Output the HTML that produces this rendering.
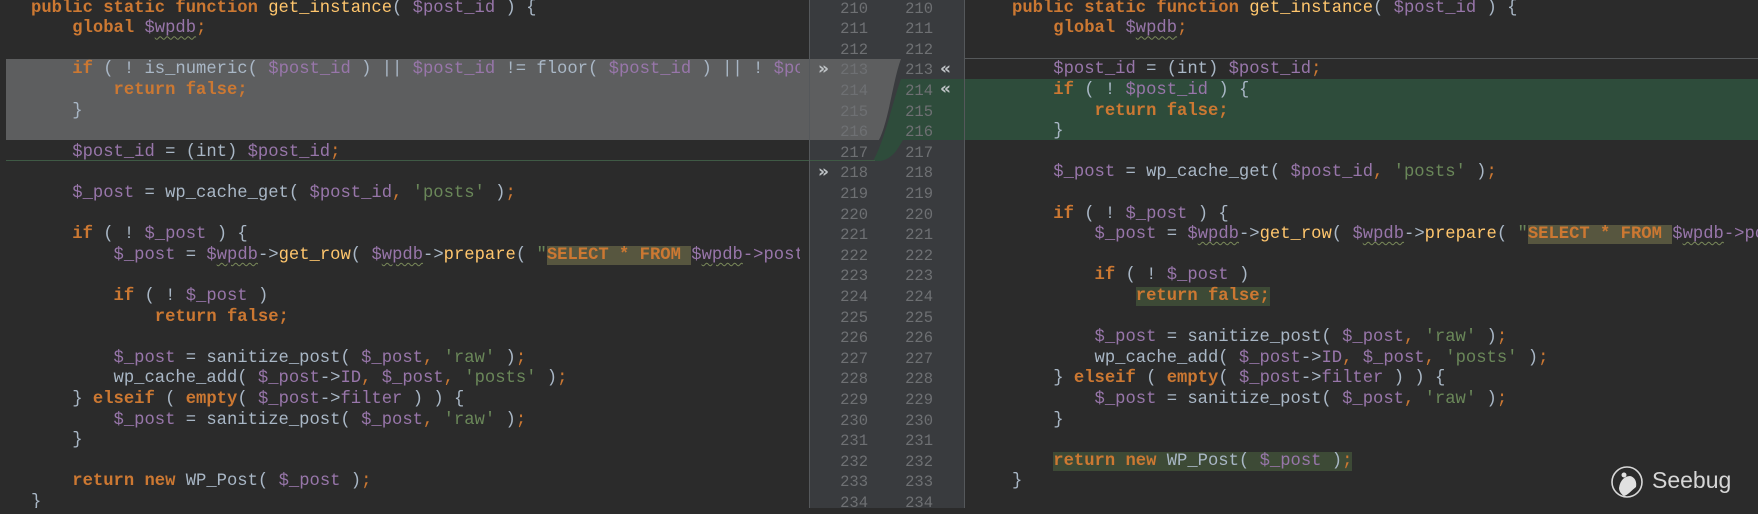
<!DOCTYPE html>
<html><head><meta charset="utf-8"><style>
body{margin:0;width:1758px;height:508px;background:#2b2b2b;overflow:hidden;position:relative;font-family:"Liberation Mono",monospace;}
.pane{position:absolute;top:0;height:508px;overflow:hidden;}
pre{margin:0;position:absolute;top:-1.3px;font-family:"Liberation Mono",monospace;font-size:17.2px;line-height:20.6px;color:#a9b7c6;white-space:pre;}
.k{color:#cc7832;font-weight:bold}
.v{color:#9876aa}
.f{color:#ffc66d}
.s{color:#6a8759}
.o{color:#cc7832}
.u{text-decoration:underline wavy #7a8a5a;text-decoration-thickness:1px;text-underline-offset:3px}
.hl{background:#57563f}
.hg{background:#3d4a36}
.num{position:absolute;top:-1.3px;font-family:"Liberation Mono",monospace;font-size:15.5px;line-height:20.6px;color:#6e7073;white-space:pre;text-align:right;}
.ch{position:absolute;color:#bfc3c6;font-size:17px;font-family:"DejaVu Sans",sans-serif;font-weight:bold}
</style></head><body>
<div style="position:absolute;left:6px;top:59px;width:804px;height:81px;background:#5d5e5f"></div>
<div style="position:absolute;left:6px;top:160px;width:804px;height:1px;background:#3f5a45"></div>
<div style="position:absolute;left:965px;top:58px;width:793px;height:1px;background:#55585a"></div>
<div style="position:absolute;left:965px;top:79px;width:793px;height:61px;background:#2e4c3b"></div>
<div style="position:absolute;left:809px;top:0;width:156px;height:508px;background:#393b3e"></div>
<div style="position:absolute;left:809px;top:0;width:1px;height:508px;background:#55585b"></div>
<div style="position:absolute;left:964px;top:0;width:1px;height:508px;background:#55585b"></div>
<svg style="position:absolute;left:809px;top:0" width="156" height="200">
<path d="M1 59 L92 59 C84 80 80 120 70 140 L1 140 Z" fill="#5d5e5f"/>
<path d="M92 79 L155 79 L155 140 L94 140 C88 150 84 158 72 161 L64 161 C76 140 84 100 92 79 Z" fill="#2e4c3b"/>
<line x1="1" y1="160.5" x2="66" y2="160.5" stroke="#3f5a45"/>
</svg>
<div class="num" style="left:830px;width:38px">210
211
212
213
214
215
216
217
218
219
220
221
222
223
224
225
226
227
228
229
230
231
232
233
234</div>
<div class="num" style="left:895px;width:38px">210
211
212
213
214
215
216
217
218
219
220
221
222
223
224
225
226
227
228
229
230
231
232
233
234</div>
<div class="ch" style="left:818px;top:59px">»</div>
<div class="ch" style="left:818px;top:162px">»</div>
<div class="ch" style="left:940px;top:59px">«</div>
<div class="ch" style="left:940px;top:79px">«</div>
<div class="pane" style="left:0;width:800px">
<pre style="left:31px"><span class="k">public static function </span><span class="f">get_instance</span>( <span class="v">$post_id</span> ) {
    <span class="k">global </span><span class="v">$<span class="u">wpdb</span></span><span class="o">;</span>

    <span class="k">if </span>( ! is_numeric( <span class="v">$post_id</span> ) || <span class="v">$post_id</span> != floor( <span class="v">$post_id</span> ) || ! <span class="v">$post_id</span> ) {
        <span class="k">return false;</span>
    }

    <span class="v">$post_id</span> = (int) <span class="v">$post_id</span><span class="o">;</span>

    <span class="v">$_post</span> = wp_cache_get( <span class="v">$post_id</span><span class="o">, </span><span class="s">'posts'</span> )<span class="o">;</span>

    <span class="k">if </span>( ! <span class="v">$_post</span> ) {
        <span class="v">$_post</span> = <span class="v">$<span class="u">wpdb</span></span>-&gt;<span class="f">get_row</span>( <span class="v">$<span class="u">wpdb</span></span>-&gt;<span class="f">prepare</span>( <span class="s">"</span><span class="k hl">SELECT * FROM </span><span class="v">$<span class="u">wpdb</span>-&gt;posts</span>

        <span class="k">if </span>( ! <span class="v">$_post</span> )
            <span class="k">return false;</span>

        <span class="v">$_post</span> = sanitize_post( <span class="v">$_post</span><span class="o">, </span><span class="s">'raw'</span> )<span class="o">;</span>
        wp_cache_add( <span class="v">$_post</span>-&gt;<span class="v">ID</span><span class="o">, </span><span class="v">$_post</span><span class="o">, </span><span class="s">'posts'</span> )<span class="o">;</span>
    } <span class="k">elseif </span>( <span class="k">empty</span>( <span class="v">$_post</span>-&gt;<span class="v">filter</span> ) ) {
        <span class="v">$_post</span> = sanitize_post( <span class="v">$_post</span><span class="o">, </span><span class="s">'raw'</span> )<span class="o">;</span>
    }

    <span class="k">return new </span>WP_Post( <span class="v">$_post</span> )<span class="o">;</span>
}</pre>
</div>
<div class="pane" style="left:965px;width:793px">
<pre style="left:47px"><span class="k">public static function </span><span class="f">get_instance</span>( <span class="v">$post_id</span> ) {
    <span class="k">global </span><span class="v">$<span class="u">wpdb</span></span><span class="o">;</span>

    <span class="v">$post_id</span> = (int) <span class="v">$post_id</span><span class="o">;</span>
    <span class="k">if </span>( ! <span class="v">$post_id</span> ) {
        <span class="k">return false;</span>
    }

    <span class="v">$_post</span> = wp_cache_get( <span class="v">$post_id</span><span class="o">, </span><span class="s">'posts'</span> )<span class="o">;</span>

    <span class="k">if </span>( ! <span class="v">$_post</span> ) {
        <span class="v">$_post</span> = <span class="v">$<span class="u">wpdb</span></span>-&gt;<span class="f">get_row</span>( <span class="v">$<span class="u">wpdb</span></span>-&gt;<span class="f">prepare</span>( <span class="s">"</span><span class="k hl">SELECT * FROM </span><span class="v">$<span class="u">wpdb</span>-&gt;posts</span>

        <span class="k">if </span>( ! <span class="v">$_post</span> )
            <span class="k hg">return false;</span>

        <span class="v">$_post</span> = sanitize_post( <span class="v">$_post</span><span class="o">, </span><span class="s">'raw'</span> )<span class="o">;</span>
        wp_cache_add( <span class="v">$_post</span>-&gt;<span class="v">ID</span><span class="o">, </span><span class="v">$_post</span><span class="o">, </span><span class="s">'posts'</span> )<span class="o">;</span>
    } <span class="k">elseif </span>( <span class="k">empty</span>( <span class="v">$_post</span>-&gt;<span class="v">filter</span> ) ) {
        <span class="v">$_post</span> = sanitize_post( <span class="v">$_post</span><span class="o">, </span><span class="s">'raw'</span> )<span class="o">;</span>
    }

    <span class="hg"><span class="k">return new </span>WP_Post( <span class="v">$_post</span> )<span class="o">;</span></span>
}</pre>
</div>
<svg style="position:absolute;left:1610px;top:464px" width="36" height="36" viewBox="0 0 36 36">
<circle cx="17" cy="18" r="15" fill="none" stroke="#d8d8d8" stroke-width="1.6"/>
<path d="M9 24 C10 16 15 12 20 12 C25 13 27 18 26 23 C22 26 18 31 14 32 C11 30 9 27 9 24 Z" fill="#e0e0e0"/>
<circle cx="14" cy="11" r="2.5" fill="#e0e0e0"/>
</svg>
<div style="position:absolute;left:1652px;top:467px;font-family:'Liberation Sans',sans-serif;font-size:23px;color:#d6d6d6;">Seebug</div>
</body></html>
